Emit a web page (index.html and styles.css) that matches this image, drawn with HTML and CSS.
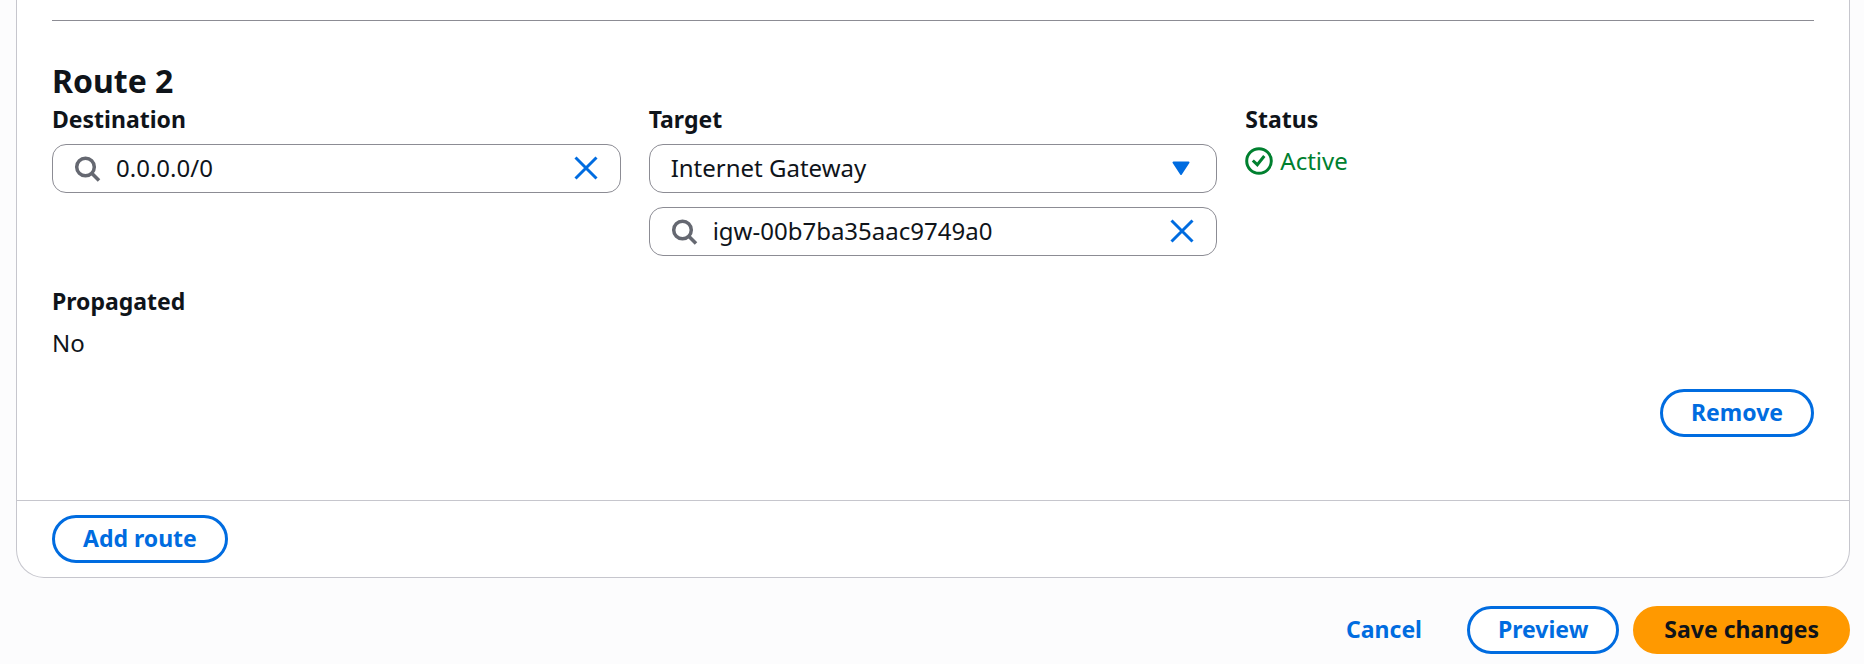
FILE: index.html
```
<!DOCTYPE html>
<html lang="en">
<head>
<meta charset="utf-8">
<title>Edit routes</title>
<link rel="stylesheet" href="styles.css">
</head>
<body>
<form class="page">
  <section class="card">
    <div class="card-body">
      <hr class="divider">
      <h2 class="route-title">Route 2</h2>
      <div class="columns">
        <div class="field">
          <label class="label" for="destination">Destination</label>
          <div class="control">
            <svg class="icon search" viewBox="0 0 28 28" aria-hidden="true"><circle cx="12.500" cy="12" r="8.800"/><path d="M18.500 18l7.500 7.500"/></svg>
            <input class="input" id="destination" type="text" value="0.0.0.0/0">
            <button class="clear" type="button" aria-label="Clear destination"><svg class="icon cross" viewBox="0 0 28 28" aria-hidden="true"><path d="M3.500 2.500l21 21M24.500 2.500l-21 21"/></svg></button>
          </div>
        </div>
        <div class="field">
          <label class="label" for="target">Target</label>
          <div class="stack">
            <div class="control">
              <select class="input select" id="target"><option>Internet Gateway</option></select>
              <svg class="icon caret" viewBox="0 0 28 28" aria-hidden="true"><path d="M5.500 7.500h15l-7.500 11.500z"/></svg>
            </div>
            <div class="control">
              <svg class="icon search" viewBox="0 0 28 28" aria-hidden="true"><circle cx="12.500" cy="12" r="8.800"/><path d="M18.500 18l7.500 7.500"/></svg>
              <input class="input" type="text" aria-label="Internet gateway" value="igw-00b7ba35aac9749a0">
              <button class="clear" type="button" aria-label="Clear gateway"><svg class="icon cross" viewBox="0 0 28 28" aria-hidden="true"><path d="M3.500 2.500l21 21M24.500 2.500l-21 21"/></svg></button>
            </div>
          </div>
        </div>
        <div class="field">
          <div class="label">Status</div>
          <div class="status">
            <svg class="icon check" viewBox="0 0 28 28" aria-hidden="true"><circle cx="14" cy="14" r="12.300"/><path d="M7.800 13.500l4.500 4.200 7-8.700"/></svg>
            <span>Active</span>
          </div>
        </div>
        <div class="field">
          <div class="label">Propagated</div>
          <div class="value">No</div>
        </div>
      </div>
      <div class="row-actions"><button class="button" type="button">Remove</button></div>
    </div>
    <div class="card-footer"><button class="button" type="button">Add route</button></div>
  </section>
  <div class="form-actions">
    <button class="button link" type="button">Cancel</button>
    <button class="button" type="button">Preview</button>
    <button class="button primary" type="submit">Save changes</button>
  </div>
</form>
</body>
</html>
```
FILE: styles.css
```
* { box-sizing: border-box; }
body {
  margin: 0;
  background: #fcfcfd;
  color: #0f141a;
  font: 24px/34px "Noto Sans", "Open Sans", sans-serif;
}
.page { padding: 0 14px 0 16px; }
.card {
  background: #fff;
  border: 1px solid #c6c6cd;
  border-top: 0;
  border-radius: 0 0 28px 28px;
}
.card-body { padding: 20px 35px 63px; }
.divider { margin: 0 0 38px; border: 0; border-top: 1px solid #8c8c94; }
.route-title { margin: 0; font-size: 32px; line-height: 44px; font-weight: 700; }
.columns {
  display: grid;
  grid-template-columns: repeat(3, minmax(0, 1fr));
  gap: 29px 28px;
}
.label { display: block; font-size: 23px; font-weight: 700; line-height: 32px; margin-bottom: 9px; }
.stack { display: grid; gap: 14px; }
.control {
  display: flex;
  align-items: center;
  height: 49px;
  padding: 0 20px;
  background: #fff;
  border: 1px solid #8c8c94;
  border-radius: 14px;
}
.input {
  flex: 1;
  min-width: 0;
  padding: 0 0 2px 1px;
  border: 0;
  outline: 0;
  background: none;
  color: inherit;
  font: inherit;
  appearance: none;
}
.icon { flex: none; width: 28px; height: 28px; fill: none; }
.search { margin-right: 14px; stroke: #656871; stroke-width: 3.500; }
.cross { display: block; stroke: #006ce0; stroke-width: 3; }
.clear { padding: 0; border: 0; background: none; }
.caret { fill: #006ce0; stroke: #006ce0; stroke-width: 2; stroke-linejoin: round; }
.check { stroke: #00802f; stroke-width: 3; }
.status { display: flex; align-items: center; gap: 7px; color: #00802f; }
.row-actions { display: flex; justify-content: flex-end; padding-top: 29px; }
.card-footer { padding: 14px 35px; border-top: 1px solid #c6c6cd; }
.form-actions { display: flex; justify-content: flex-end; gap: 14px; padding: 28px 0 10px; }
.button {
  display: block;
  height: 48px;
  padding: 0 28px 2px;
  border: 3px solid #006ce0;
  border-radius: 24px;
  background: #fff;
  color: #006ce0;
  font: inherit;
  font-size: 23px;
  font-weight: 700;
  line-height: 40px;
}
.link { border-color: transparent; background: none; }
.primary { border-color: #ff9900; background: #ff9900; color: #0f141a; }
```
